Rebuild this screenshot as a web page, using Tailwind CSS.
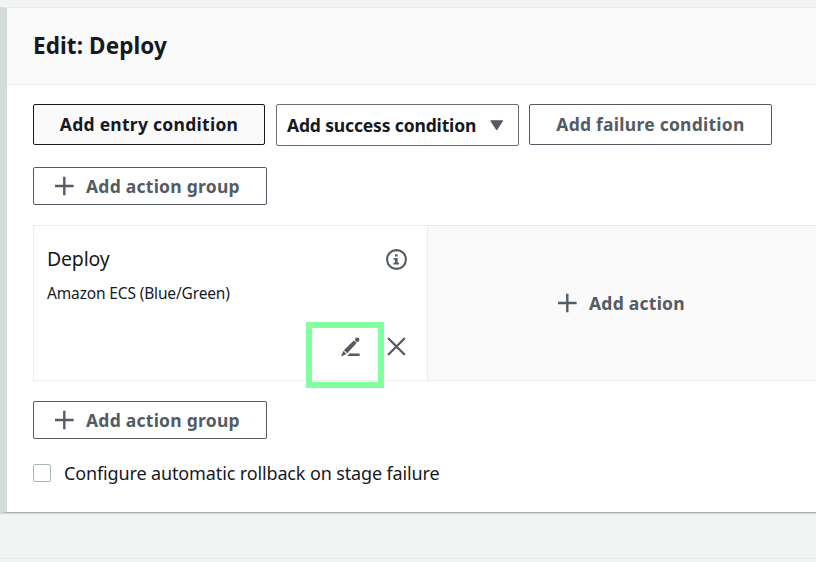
<!DOCTYPE html>
<html lang="en">
<head>
<meta charset="utf-8">
<title>Edit: Deploy</title>
<script src="https://cdn.jsdelivr.net/npm/@tailwindcss/browser@4"></script>
</head>
<body class="h-[562px] w-[816px] overflow-hidden bg-[#f2f3f3] pt-[7px] font-['Noto_Sans','Open_Sans',sans-serif] text-[#16191f]">
<main class="h-[506px] border-l-[7px] border-t border-b border-l-[#d5dbdb] border-t-[#eaeded] border-b-[#a9b2b7] bg-white shadow-[0_1px_1px_#d5dbdb]">
  <header class="flex h-[77px] items-center border-b border-[#eaeded] bg-[#fafafa] pl-[26px]">
    <h1 class="whitespace-nowrap text-[22.5px] font-bold leading-8 tracking-[0.1px]">Edit: Deploy</h1>
  </header>
  <div class="pl-[26px] pt-[19px]">
    <div class="flex items-start whitespace-nowrap text-[17.5px] font-bold">
      <button class="flex h-[41px] w-[232px] items-center justify-center rounded-[2px] border border-[#16191f] bg-[#fafafa] tracking-[0.27px]">Add entry condition</button>
      <button class="ml-[11px] flex h-[42px] w-[243px] items-center rounded-[2px] border border-[#687078] pl-[10px] tracking-[-0.15px]"><span class="w-[203px] text-left">Add success condition</span>
        <svg class="h-[11px] w-[14px]" viewBox="0 0 14 11"><path d="M.8 .8H12.6L6.7 10z" fill="#545b64" stroke="#545b64" stroke-linejoin="round"/></svg>
      </button>
      <button class="ml-[10px] flex h-[41px] w-[243px] items-center justify-center rounded-[2px] border border-[#545b64] text-[#545b64] tracking-[0.25px]">Add failure condition</button>
    </div>
    <button class="mt-[21px] flex h-[38px] w-[234px] items-center whitespace-nowrap rounded-[2px] border border-[#545b64] pl-[20px] text-[17.5px] font-bold tracking-[0.25px] text-[#545b64]">
      <svg class="mr-[12px] h-5 w-5" viewBox="0 0 20 20" fill="none" stroke="#545b64" stroke-width="2.4"><path d="M10.3 .8v18.4M1 10h18.6"/></svg><span>Add action group</span>
    </button>
    <section class="mt-[20px] flex h-[156px] border-y border-l border-[#eaeded]">
      <div class="flex w-[394px] flex-col border-r border-[#eaeded] pl-[13px]">
        <div class="flex h-[57px] shrink-0 justify-between pt-[19px]">
          <h2 class="whitespace-nowrap text-[19.5px] leading-[27px] tracking-[-0.2px]">Deploy</h2>
          <svg class="mr-[20px] mt-[3px] h-[22px] w-[22px]" viewBox="0 0 22 22"><circle cx="11.5" cy="11.5" r="9.4" fill="none" stroke="#545b64" stroke-width="2.1"/><path d="M10 6.2h2.6v2.4H10zM8.6 10h4v4.8h1.4v1.8H8.4v-1.8H10v-3H8.6z" fill="#545b64"/></svg>
        </div>
        <p class="shrink-0 whitespace-nowrap text-[15.5px] leading-5 tracking-[-0.15px]">Amazon ECS (Blue/Green)</p>
        <div class="mt-[19px] flex items-start justify-end">
          <div class="relative flex h-[66px] w-[78px] shrink-0 border-[6px] border-[#82ff9f] pl-[28px] pt-[9px]">
            <svg class="h-[20px] w-[20px]" viewBox="0 0 20 20" fill="#545b64"><path d="M13.7 3.4l3 2.7L7.3 16.3l-3.4-3z"/><circle cx="17.2" cy="2.8" r="2.2"/><path d="M3.2 14l3.4 3L1 19.4z"/><path d="M9.6 16.6h10V19H7.1z"/></svg>
          </div>
          <svg class="ml-[3px] mr-[20px] mt-[15px] h-[20px] w-[20px] shrink-0" viewBox="0 0 20 20" fill="none" stroke="#545b64" stroke-width="2.3" stroke-linecap="round"><path d="M1.7 1.7L17.2 17.2M17.2 1.7L1.7 17.2"/></svg>
        </div>
      </div>
      <div class="flex flex-1 items-center bg-[#fafafa] pl-[129px] text-[17.5px] font-bold tracking-[0.25px] text-[#545b64]">
        <svg class="mr-[12px] h-5 w-5" viewBox="0 0 20 20" fill="none" stroke="#545b64" stroke-width="2.4"><path d="M10.3 .8v18.4M1 10h18.6"/></svg><span class="whitespace-nowrap">Add action</span>
      </div>
    </section>
    <button class="mt-[20px] flex h-[38px] w-[234px] items-center whitespace-nowrap rounded-[2px] border border-[#545b64] pl-[20px] text-[17.5px] font-bold tracking-[0.25px] text-[#545b64]">
      <svg class="mr-[12px] h-5 w-5" viewBox="0 0 20 20" fill="none" stroke="#545b64" stroke-width="2.4"><path d="M10.3 .8v18.4M1 10h18.6"/></svg><span>Add action group</span>
    </button>
    <label class="mt-[21px] flex h-[26px] items-center whitespace-nowrap text-[18px]">
      <span class="mr-[13px] h-[18px] w-[18px] rounded-[2px] border border-[#aab7b8] bg-white"></span><span class="tracking-[-0.13px]">Configure automatic rollback on stage failure</span>
    </label>
  </div>
</main>
<div class="mt-[45px] h-px bg-[#eaeded]"></div>
</body>
</html>
